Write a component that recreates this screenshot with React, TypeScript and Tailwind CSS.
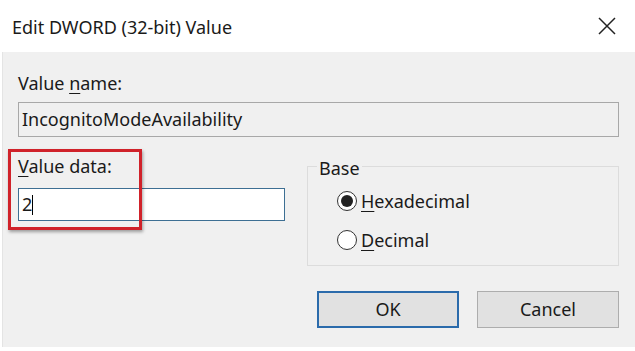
import { useState } from 'react';

// Edit DWORD dialog (regedit)
const font = { fontFamily: '"Noto Sans", "Liberation Sans", sans-serif' };

const Radio = ({ checked, label, hotkey, onClick }: { checked: boolean; label: string; hotkey: string; onClick: () => void }) => (
  <div className="flex items-center h-[24px] cursor-default" onClick={onClick}>
    <span className="w-[20px] h-[20px] rounded-full border border-[#333] bg-white flex items-center justify-center">
      {checked && <span className="w-[12px] h-[12px] rounded-full bg-[#222]" />}
    </span>
    <span className="ml-[4px] text-[18px] text-[#1a1a1a]">
      <span className="underline underline-offset-[3px]">{hotkey}</span>
      {label.slice(1)}
    </span>
  </div>
);

export default function App() {
  const [hex, setHex] = useState(true);

  return (
    <div className="w-[635px] h-[351px] bg-white overflow-hidden" style={font}>
      <div className="h-[52px] flex items-center justify-between pl-[12px] pr-[19px]">
        <span className="text-[18px] text-[#1a1a1a] pt-[2px]">Edit DWORD (32-bit) Value</span>
        <svg width="18" height="18" viewBox="0 0 18 18" className="stroke-[#222]">
          <path d="M1 1L17 17M17 1L1 17" strokeWidth="1.5" fill="none" />
        </svg>
      </div>

      <div className="h-[295px] ml-[2px] bg-[#f0f0f0] pl-[15px] pr-[16px] pt-[19px] border-l border-[#e4e4e4]">
        <div className="text-[18px] text-[#1a1a1a] leading-[24px]">
          Value <span className="underline underline-offset-[3px]">n</span>ame:
        </div>
        <div className="mt-[7px] h-[35px] border border-[#a8a8a8] bg-[#f0f0f0] flex items-center pl-[3px] text-[18px] text-[#1a1a1a]">
          IncognitoModeAvailability
        </div>

        <div className="flex mt-[17px]">
          <div className="relative w-[267px]">
            <div className="absolute left-[-10px] top-[-5px] w-[134px] h-[81px] border-[3px] border-[#d0222a] shadow-[1px_2px_3px_rgba(0,0,0,0.35)]" />
            <div className="text-[18px] text-[#1a1a1a] leading-[24px]">
              <span className="underline underline-offset-[3px]">V</span>alue data:
            </div>
            <div className="mt-[10px] h-[33px] border border-[#3d6f93] bg-white flex items-center pl-[3px] text-[18px] text-[#1a1a1a]">
              2<span className="w-[1px] h-[20px] bg-black" />
            </div>
          </div>

          <div className="ml-[22px] flex-1 relative pt-[12px]">
            <div className="absolute left-[10px] top-[2px] px-[2px] bg-[#f0f0f0] text-[18px] text-[#1a1a1a] leading-[24px]">Base</div>
            <div className="h-[100px] border border-[#dcdcdc] pl-[29px] pt-[22px] flex flex-col gap-[15px]">
              <Radio checked={hex} label="Hexadecimal" hotkey="H" onClick={() => setHex(true)} />
              <Radio checked={!hex} label="Decimal" hotkey="D" onClick={() => setHex(false)} />
            </div>
          </div>
        </div>

        <div className="flex justify-end gap-[18px] mt-[25px]">
          <button className="w-[142px] h-[37px] border-2 border-[#2b6bab] bg-[#e1e1e1] text-[18px] text-[#1a1a1a]">OK</button>
          <button className="w-[142px] h-[37px] border border-[#adadad] bg-[#e1e1e1] text-[18px] text-[#1a1a1a]">Cancel</button>
        </div>
      </div>
    </div>
  );
}
